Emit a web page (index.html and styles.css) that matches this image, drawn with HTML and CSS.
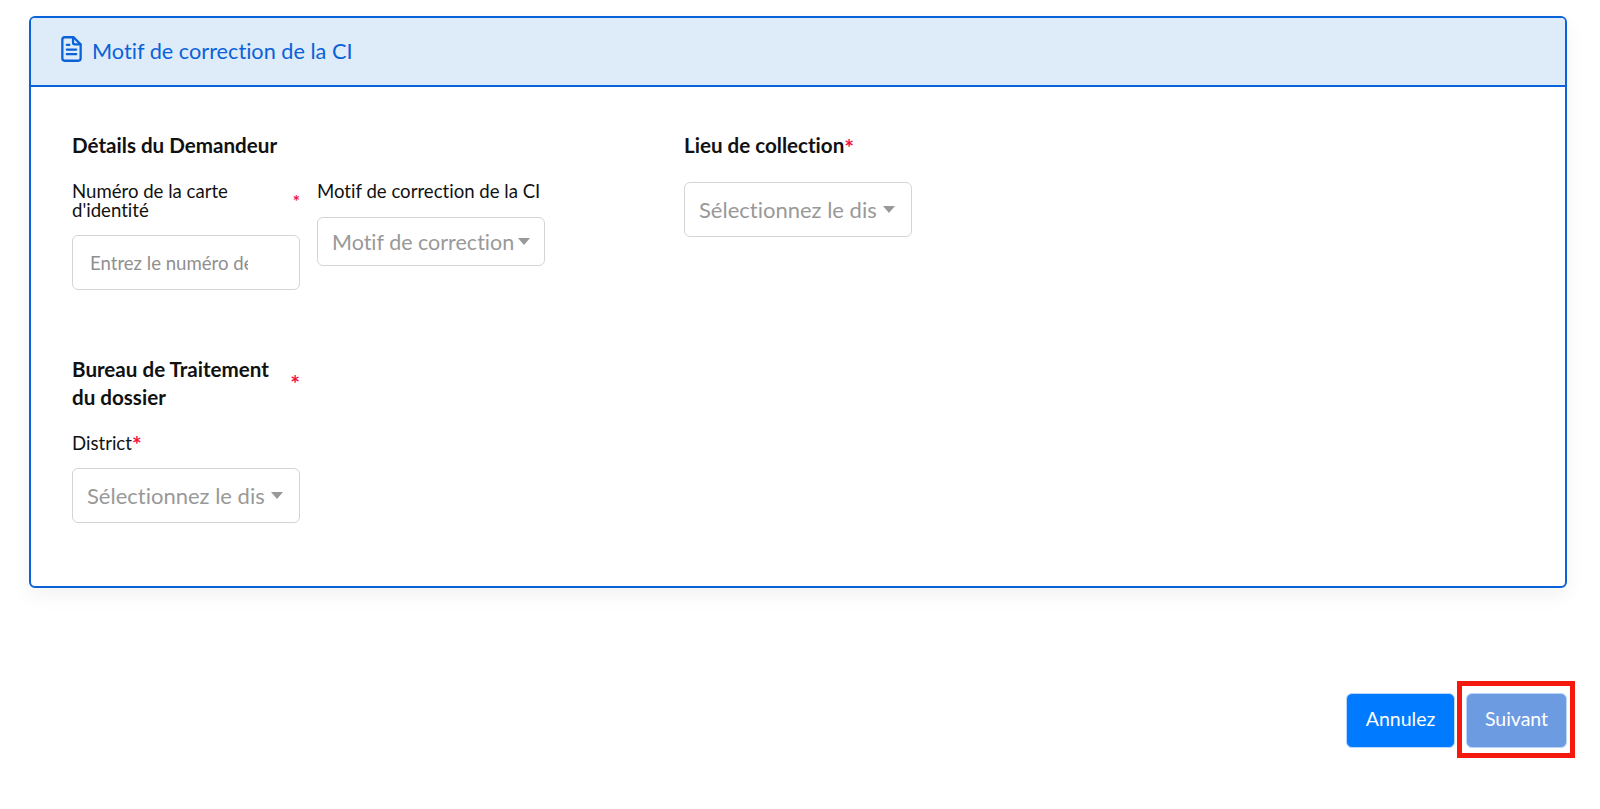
FILE: index.html
```html
<!DOCTYPE html>
<html lang="fr">
<head>
  <meta charset="UTF-8">
  <title>Motif de correction de la CI</title>
  <meta name="viewport" content="width=device-width, initial-scale=1">
  <link rel="stylesheet" href="styles.css">
</head>
<body>
  <div class="card">
    <div class="card-header">
      <svg class="card-icon" viewBox="0 0 20 25" width="21" height="26" fill="none" stroke="#0a62d8" stroke-width="2.2" stroke-linejoin="round" stroke-linecap="round">
        <path d="M3.5 1.2h8.5l6.8 6.8v13.5a2.3 2.3 0 0 1-2.3 2.3H3.5a2.3 2.3 0 0 1-2.3-2.3V3.5a2.3 2.3 0 0 1 2.3-2.3z"/>
        <path d="M11.5 1.5v5a1.5 1.5 0 0 0 1.5 1.5h5.5"/>
        <path d="M5.5 8.5h2.5M5.5 13h9M5.5 17.5h9"/>
      </svg>
      <span class="card-title">Motif de correction de la CI</span>
    </div>

    <div class="card-body">
      <div class="form-top">
        <div class="section-left">
          <h3 class="section-title">Détails du Demandeur</h3>
          <div class="field-row">
            <div class="field">
              <div class="label-split">
                <label class="field-label" for="cin">Numéro de la carte d'identité</label>
                <span class="req req-small">*</span>
              </div>
              <input class="text-input" id="cin" type="text" placeholder="Entrez le numéro de la carte">
            </div>
            <div class="field">
              <div class="field-label field-label-single">Motif de correction de la CI</div>
              <div class="select select-short">
                <span class="select-text">Motif de correction</span>
                <span class="caret"></span>
              </div>
            </div>
          </div>
        </div>
        <div class="section-right">
          <h3 class="section-title">Lieu de collection<span class="req req-big">*</span></h3>
          <div class="select select-pad">
            <span class="select-text">Sélectionnez le district</span>
            <span class="caret"></span>
          </div>
        </div>
      </div>

      <div class="section-bureau">
        <div class="label-split">
          <h3 class="section-title section-title-wrap">Bureau de Traitement du dossier</h3>
          <span class="req req-big">*</span>
        </div>
        <div class="field-label district-label">District<span class="req req-big">*</span></div>
        <div class="select">
          <span class="select-text">Sélectionnez le district</span>
          <span class="caret"></span>
        </div>
      </div>
    </div>
  </div>

  <div class="actions">
    <button class="btn btn-primary" type="button">Annulez</button>
    <div class="btn-marked">
      <button class="btn btn-disabled" type="button">Suivant</button>
      <div class="mark"></div>
    </div>
  </div>
</body>
</html>
```

FILE: styles.css
```css
* {
  box-sizing: border-box;
}
body {
  margin: 0;
  padding: 16px 33px 40px 29px;
  background: #ffffff;
  font-family: 'Lato', 'Noto Sans', sans-serif;
  font-variant-ligatures: none;
  color: #111111;
}

.card {
  border: 2px solid #0a62d8;
  border-radius: 6px;
  height: 572px;
  box-shadow: 0 8px 20px rgba(0, 0, 0, 0.05);
  background: #ffffff;
}
.card-header {
  display: flex;
  align-items: center;
  gap: 10px;
  height: 69px;
  padding: 0 0 2px 30px;
  background: #deebf8;
  border-bottom: 2px solid #0a62d8;
  border-radius: 4px 4px 0 0;
}
.card-icon {
  flex: none;
  margin-bottom: 4px;
}
.card-title {
  font-size: 21.7px;
  color: #0a62d8;
}

.card-body {
  padding: 44px 41px 0;
}
.form-top {
  display: flex;
}
.section-left {
  width: 612px;
}
.section-title {
  margin: 0;
  font-size: 20.6px;
  line-height: 28px;
  font-weight: 700;
}
.field-row {
  display: flex;
  gap: 17px;
  margin-top: 23px;
}
.field {
  width: 228px;
}
.label-split {
  display: flex;
  align-items: center;
  justify-content: space-between;
}
.field-label {
  width: 170px;
  font-size: 18.6px;
  line-height: 19px;
}
.field-label-single {
  width: auto;
  white-space: nowrap;
  margin-bottom: 16px;
}
.req {
  color: #f0103f;
  font-weight: 700;
}
.req-small {
  font-size: 17px;
}
.req-big {
  font-size: 23px;
  line-height: 0;
  vertical-align: -3px;
}

.text-input {
  display: block;
  width: 100%;
  height: 55px;
  margin-top: 15px;
  padding: 0 51px 0 17px;
  border: 1.5px solid #d4d4d4;
  border-radius: 6px;
  font-family: inherit;
  font-size: 18.6px;
  font-variant-ligatures: none;
  outline: none;
}
.text-input::placeholder {
  color: #8f8f8f;
  opacity: 1;
}

.select {
  display: flex;
  align-items: center;
  width: 228px;
  height: 55px;
  padding: 0 16px 0 14px;
  border: 1.5px solid #d4d4d4;
  border-radius: 6px;
  color: #999999;
  font-size: 22px;
}
.select-short {
  height: 49px;
  padding-right: 14px;
}
.select-pad {
  margin-top: 23px;
}
.select-text {
  flex: 1;
  min-width: 0;
  overflow: hidden;
  white-space: nowrap;
}
.select-short .select-text {
  font-size: 21.5px;
}
.select-short .caret {
  margin-left: 2px;
}
.caret {
  flex: none;
  width: 0;
  height: 0;
  margin-left: 6px;
  border-left: 6.5px solid transparent;
  border-right: 6.5px solid transparent;
  border-top: 7px solid #999999;
}

.section-bureau {
  width: 228px;
  margin-top: 65px;
}
.section-title-wrap {
  width: 205px;
}
.district-label {
  margin: 23px 0 15px;
}

.actions {
  display: flex;
  justify-content: flex-end;
  align-items: center;
  gap: 11px;
  margin-top: 105px;
}
.btn {
  height: 55px;
  padding: 0 0 4px;
  border: 1px solid #b9d6fb;
  border-radius: 6px;
  color: #ffffff;
  font-family: inherit;
  font-size: 19.5px;
  font-variant-ligatures: none;
}
.btn-primary {
  width: 109px;
  background: #007bff;
}
.btn-disabled {
  width: 101px;
  background: #6c9be2;
}
.btn-marked {
  position: relative;
  display: flex;
}
.mark {
  position: absolute;
  top: -12px;
  bottom: -10px;
  left: -9px;
  right: -8px;
  border: 5px solid #f5180c;
}
```
